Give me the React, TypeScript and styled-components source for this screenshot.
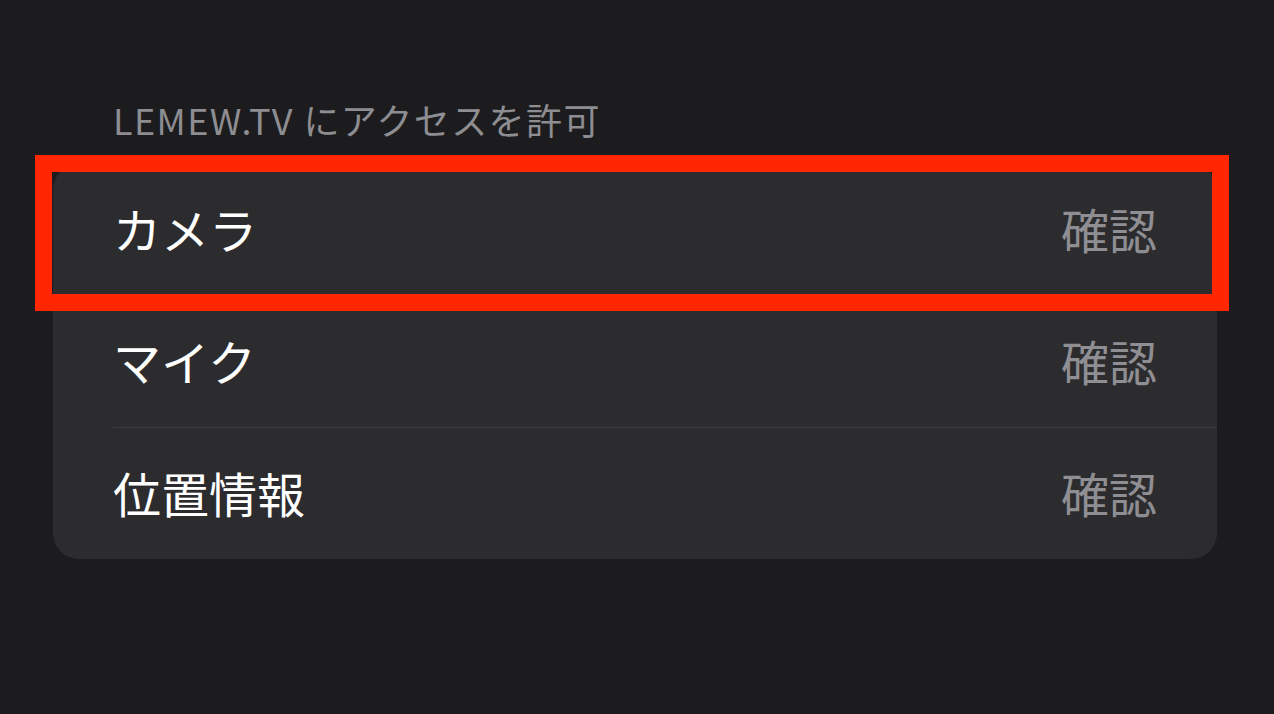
import styled, { createGlobalStyle } from "styled-components";

const GlobalStyle = createGlobalStyle`
  html, body {
    margin: 0;
    padding: 0;
    background: #1c1c1e;
  }
  body {
    font-family: "Noto Sans CJK JP", "Noto Sans", sans-serif;
  }
`;

const permissions = [
  { id: "camera", label: "カメラ", value: "確認" },
  { id: "mic", label: "マイク", value: "確認" },
  { id: "location", label: "位置情報", value: "確認" },
];

export default function App() {
  return (
    <>
      <GlobalStyle />
      <Page>
        <Section>
          <Header>LEMEW.TV にアクセスを許可</Header>
          <Card>
            {permissions.map((item, i) => (
              <Row key={item.id} $last={i === permissions.length - 1}>
                <Label>{item.label}</Label>
                <Value>{item.value}</Value>
                {i === 0 && <Highlight />}
              </Row>
            ))}
          </Card>
        </Section>
      </Page>
    </>
  );
}

const Page = styled.div`
  width: 1274px;
  height: 714px;
  overflow: hidden;
  background: #1c1c1e;
  box-sizing: border-box;
  padding: 96px 57px 0 53px;
`;

const Section = styled.section`
  display: flex;
  flex-direction: column;
`;

const Header = styled.h2`
  margin: 0 0 0 60px;
  height: 68px;
  line-height: 46px;
  color: #8d8d92;
  font-size: 36px;
  font-weight: 400;
  letter-spacing: 1.4px;
`;

const Card = styled.div`
  background: #2c2c2e;
  border-radius: 26px;
  display: flex;
  flex-direction: column;
`;

const Row = styled.div<{ $last: boolean }>`
  position: relative;
  display: flex;
  align-items: center;
  justify-content: space-between;
  box-sizing: border-box;
  height: ${(p) => (p.$last ? "131px" : "132px")};
  margin-left: 60px;
  padding: 0 60px 4px 0;
  border-bottom: ${(p) => (p.$last ? "none" : "1px solid #3d3d40")};
`;

const Label = styled.span`
  color: #ffffff;
  font-size: 48px;
  font-weight: 400;
`;

const Value = styled.span`
  color: #8e8e93;
  font-size: 48px;
  font-weight: 400;
`;

const Highlight = styled.div`
  position: absolute;
  left: -78px;
  right: -12px;
  top: -9px;
  height: 156px;
  box-sizing: border-box;
  border: 17px solid #ff2600;
  pointer-events: none;
`;
